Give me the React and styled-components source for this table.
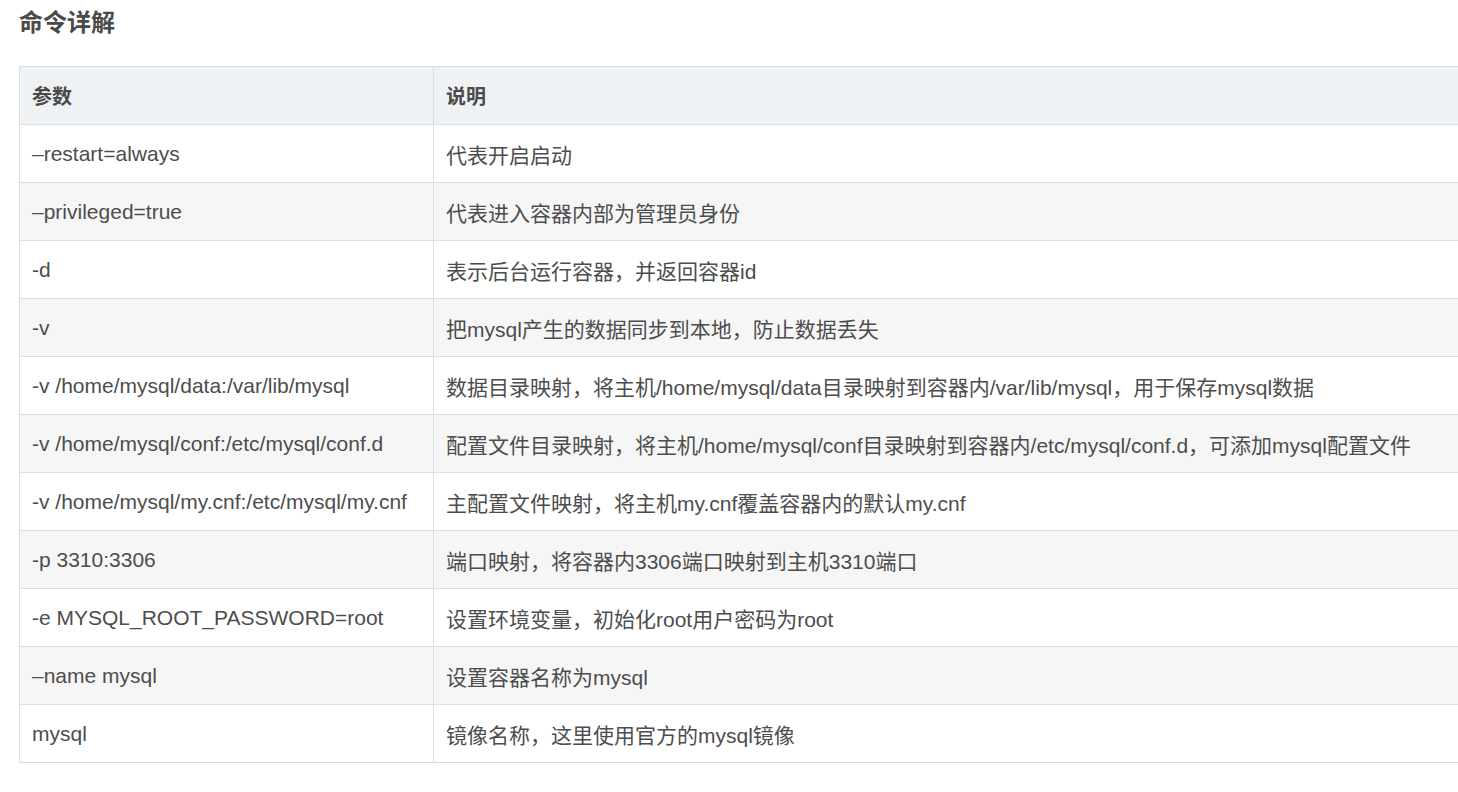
import React from 'react';
import styled, { createGlobalStyle } from 'styled-components';

const GlobalStyle = createGlobalStyle`
  html, body {
    margin: 0;
    padding: 0;
    background: #ffffff;
  }
  body {
    font-family: "Liberation Sans", "Noto Sans CJK SC", sans-serif;
    color: #4d4d4d;
  }
`;

const rows = [
  ['–restart=always', '代表开启启动'],
  ['–privileged=true', '代表进入容器内部为管理员身份'],
  ['-d', '表示后台运行容器，并返回容器id'],
  ['-v', '把mysql产生的数据同步到本地，防止数据丢失'],
  ['-v /home/mysql/data:/var/lib/mysql', '数据目录映射，将主机/home/mysql/data目录映射到容器内/var/lib/mysql，用于保存mysql数据'],
  ['-v /home/mysql/conf:/etc/mysql/conf.d', '配置文件目录映射，将主机/home/mysql/conf目录映射到容器内/etc/mysql/conf.d，可添加mysql配置文件'],
  ['-v /home/mysql/my.cnf:/etc/mysql/my.cnf', '主配置文件映射，将主机my.cnf覆盖容器内的默认my.cnf'],
  ['-p 3310:3306', '端口映射，将容器内3306端口映射到主机3310端口'],
  ['-e MYSQL_ROOT_PASSWORD=root', '设置环境变量，初始化root用户密码为root'],
  ['–name mysql', '设置容器名称为mysql'],
  ['mysql', '镜像名称，这里使用官方的mysql镜像'],
];

const Page = styled.div`
  padding: 6px 0 0 19px;
  height: 792px;
  box-sizing: border-box;
  overflow: hidden;
`;

const Title = styled.h3`
  margin: 0 0 26px;
  font-size: 24px;
  line-height: 34px;
  font-weight: bold;
  color: #4a4a4a;
`;

const Table = styled.table`
  border-collapse: collapse;
  width: 1500px;
  table-layout: fixed;
`;

const HeadRow = styled.tr`
  background: #eff2f5;
`;

const Row = styled.tr`
  background: ${p => (p.$striped ? '#f6f6f6' : '#ffffff')};
`;

const Th = styled.th`
  border: 1px solid #dddddd;
  height: 58px;
  padding: 0 12px;
  text-align: left;
  font-size: 20px;
  font-weight: bold;
  color: #4a4a4a;
  box-sizing: border-box;
`;

const Td = styled.td`
  border: 1px solid #dddddd;
  height: 58px;
  padding: 0 12px;
  font-size: 21px;
  white-space: nowrap;
  box-sizing: border-box;
`;

export default function App() {
  return (
    <>
      <GlobalStyle />
      <Page>
        <Title>命令详解</Title>
        <Table>
          <colgroup>
            <col style={{ width: 414 }} />
            <col />
          </colgroup>
          <thead>
            <HeadRow>
              <Th>参数</Th>
              <Th>说明</Th>
            </HeadRow>
          </thead>
          <tbody>
            {rows.map(([param, desc], i) => (
              <Row key={param} $striped={i % 2 === 1}>
                <Td>{param}</Td>
                <Td>{desc}</Td>
              </Row>
            ))}
          </tbody>
        </Table>
      </Page>
    </>
  );
}
